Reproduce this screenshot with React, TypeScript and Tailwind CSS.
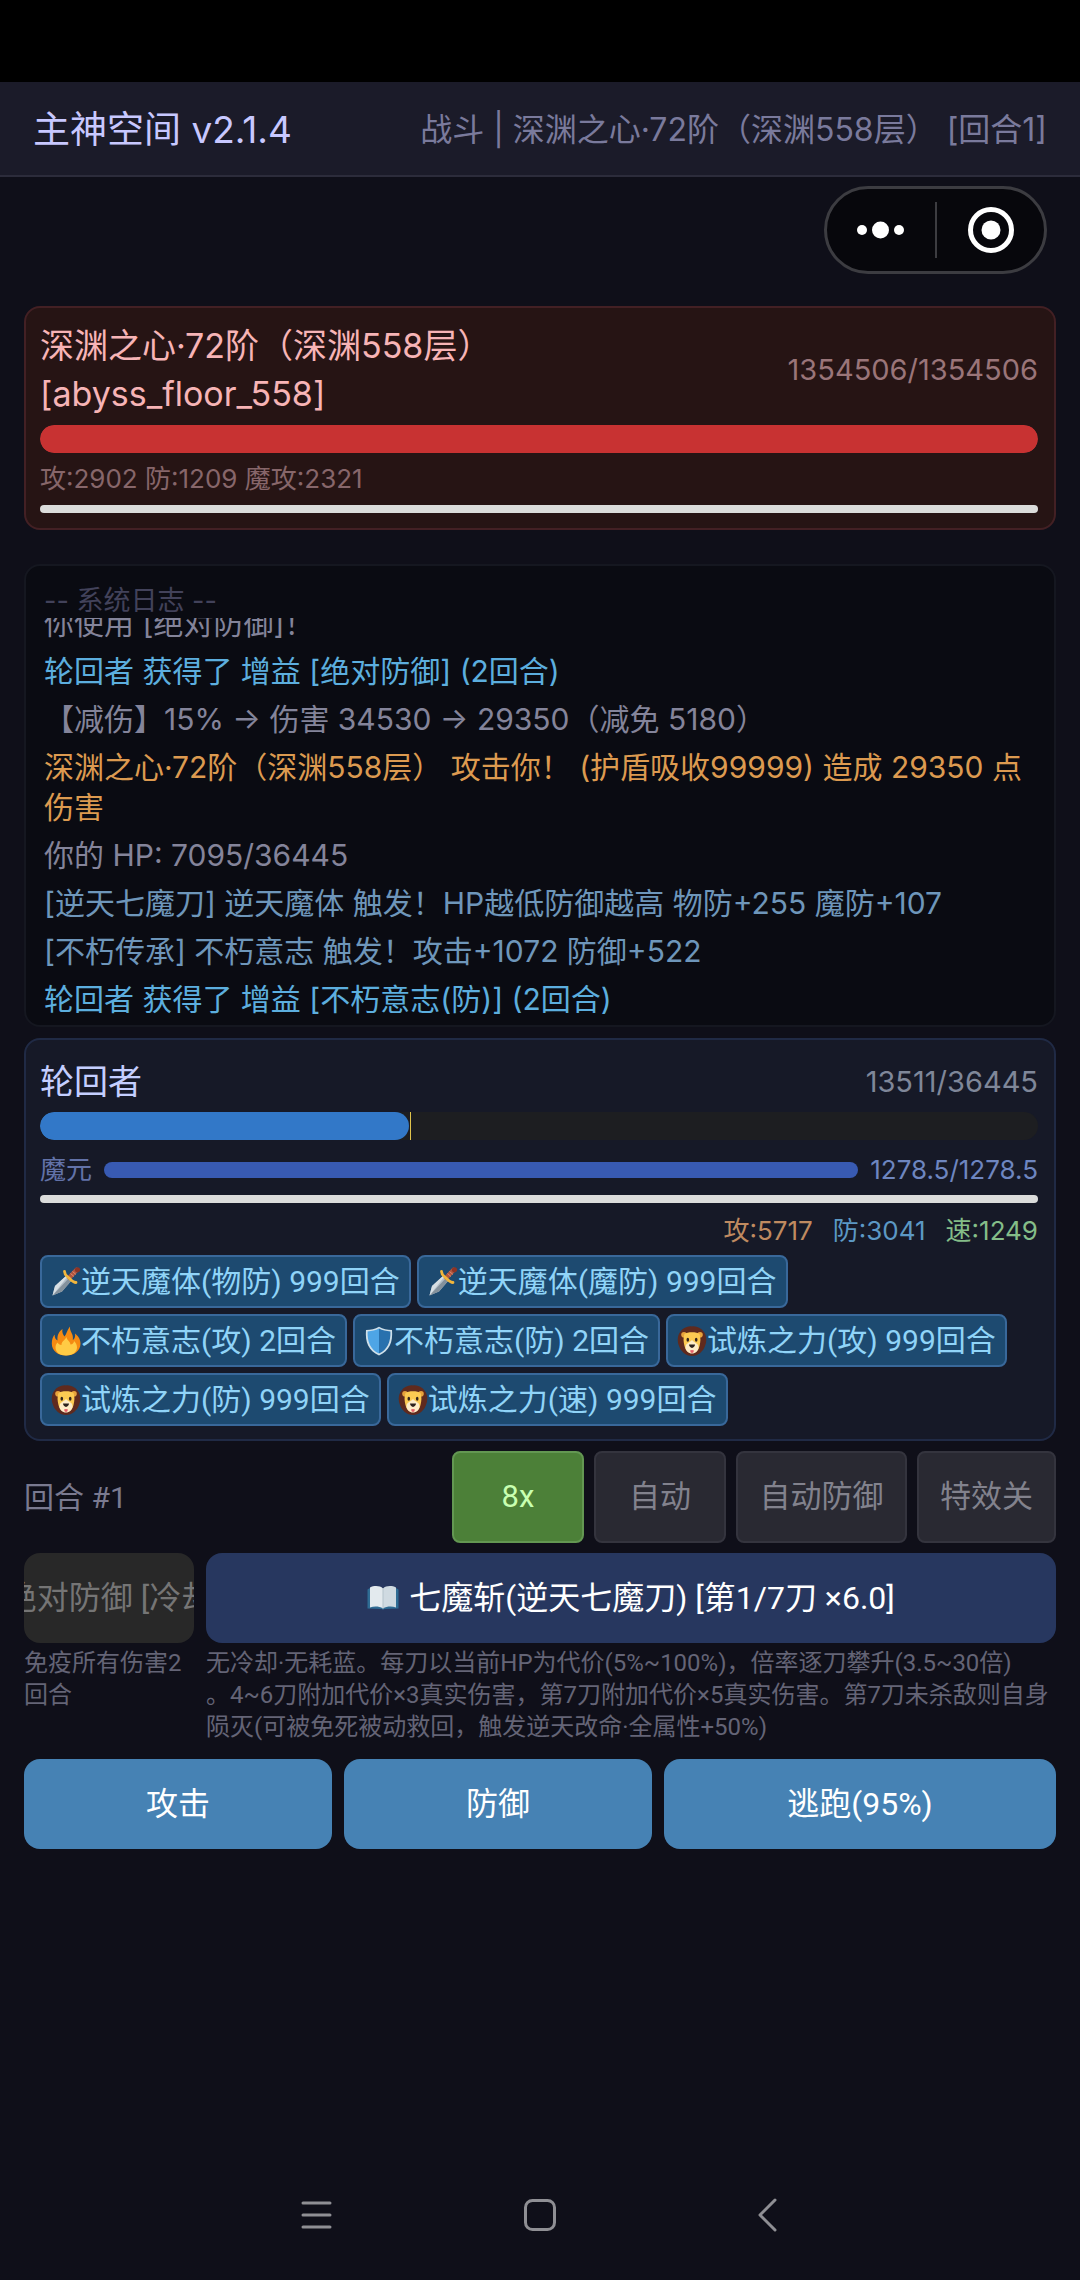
import clsx from "clsx"
import type { ReactNode } from "react"

type IconName = "dagger" | "fire" | "shield" | "lion"

interface Buff {
  icon: IconName,
  label: string,
}

interface LogLine {
  text: string,
  color: string,
}

const logs: LogLine[] = [
  { text: "你使用 [绝对防御]！", color: "text-[#84849a]" },
  { text: "轮回者 获得了 增益 [绝对防御] (2回合)", color: "text-[#5caede]" },
  { text: "【减伤】15% → 伤害 34530 → 29350（减免 5180）", color: "text-[#84849a]" },
  { text: "深渊之心·72阶（深渊558层） 攻击你！ (护盾吸收99999) 造成 29350 点伤害", color: "text-[#dc9a50]" },
  { text: "你的 HP: 7095/36445", color: "text-[#84849a]" },
  { text: "[逆天七魔刀] 逆天魔体 触发！HP越低防御越高 物防+255 魔防+107", color: "text-[#6e96ba]" },
  { text: "[不朽传承] 不朽意志 触发！攻击+1072 防御+522", color: "text-[#6e96ba]" },
  { text: "轮回者 获得了 增益 [不朽意志(防)] (2回合)", color: "text-[#5caede]" },
]

const buffs: Buff[] = [
  { icon: "dagger", label: "逆天魔体(物防) 999回合" },
  { icon: "dagger", label: "逆天魔体(魔防) 999回合" },
  { icon: "fire", label: "不朽意志(攻) 2回合" },
  { icon: "shield", label: "不朽意志(防) 2回合" },
  { icon: "lion", label: "试炼之力(攻) 999回合" },
  { icon: "lion", label: "试炼之力(防) 999回合" },
  { icon: "lion", label: "试炼之力(速) 999回合" },
]

const BuffIcon = ({ name }: { name: IconName }) => {
  if (name === "dagger") {
    return (
      <svg viewBox="0 0 30 30" className="size-[30px] shrink-0">
        <path d="M1.5 28.5 L4 19 L15.5 8.5 L20.5 13.5 L11 24.5 Z" fill="#b4bfc8" />
        <path d="M1.5 28.5 L18 11 L20.5 13.5 L11 24.5 Z" fill="#84919c" />
        <path d="M1.5 28.5 L4 19 L15.5 8.5 L16.5 9.5 Z" fill="#d7dfe4" />
        <path d="M18.5 10.5 L25.5 3" stroke="#b0553f" strokeWidth="4.6" strokeLinecap="round" />
        <path d="M19.5 6.5 L23 9.5 M21.5 4.5 L25 7.5" stroke="#dc8a70" strokeWidth="1" />
        <circle cx="26.5" cy="2.8" r="2.6" fill="#8d3426" />
        <path d="M13.5 4.5 C13.5 8 16 9 18 11 S22 15.5 25 15.5" stroke="#f2b63c" strokeWidth="2.8" strokeLinecap="round" fill="none" />
      </svg>
    )
  }
  if (name === "fire") {
    return (
      <svg viewBox="0 0 30 30" className="size-[30px] shrink-0">
        <path d="M19 .5 C18.5 4 20.5 6 21.5 9 C22 11 22 12.5 21.8 14 C23.8 13 24.5 10 24 7.5 C27 10 29.5 13 29.5 17.5 C29.5 25 23 29.5 15 29.5 C7 29.5 .8 25 .8 17.5 C.8 13.5 2 10.5 3.6 8.5 C3.6 11.5 4.5 13.5 6.5 14.5 C6 9 8 5.5 11.5 3 C10.8 6.5 12 8.5 13.5 10.5 C15.5 8 16 4 19 .5 Z" fill="#f58a12" />
        <path d="M15.5 11 C16 14.5 19 15 19.5 18.5 C21.5 18.5 22.8 17 23 15 C25 17 26 19 26 21.5 C26 26.5 21 29.5 15 29.5 C9 29.5 4.5 26.5 4.5 21.5 C4.5 19.5 5.3 17.5 6.5 16.5 C7.5 18 8.5 19 10.5 19 C10.5 15.5 13.5 14.5 15.5 11 Z" fill="#ffcb45" />
      </svg>
    )
  }
  if (name === "shield") {
    return (
      <svg viewBox="0 0 30 30" className="size-[30px] shrink-0">
        <path d="M15 .8 C19 3 23 4 28 4 C29 16 25.5 25 15 29.4 C4.5 25 1 16 2 4 C7 4 11 3 15 .8 Z" fill="#cfe0ea" />
        <path d="M15 2.6 C11.5 4.4 8 5.3 3.6 5.5 C3.2 16 6.5 23.5 15 27.6 Z" fill="#4ea5e6" />
        <path d="M15 2.6 C18.5 4.4 22 5.3 26.4 5.5 C26.8 16 23.5 23.5 15 27.6 Z" fill="#2871ae" />
      </svg>
    )
  }
  return (
    <svg viewBox="0 0 30 30" className="size-[30px] shrink-0">
      <path d="M15 .5 C19 -.3 24 2 26.5 5.5 C29.5 9 30.2 15 28 20 C26.5 25 21 30 15 30 C9 30 3.5 25 2 20 C-.2 15 .5 9 3.5 5.5 C6 2 11 -.3 15 .5 Z" fill="#5f2a1e" />
      <circle cx="7" cy="8.8" r="2.8" fill="#e8a33c" />
      <circle cx="23" cy="8.8" r="2.8" fill="#e8a33c" />
      <path d="M7.5 8 C10 5.5 20 5.5 22.5 8 C24 12 23.5 16 22.5 20 C21.5 24.5 19 26.5 15 26.5 C11 26.5 8.5 24.5 7.5 20 C6.5 16 6 12 7.5 8 Z" fill="#fcca52" />
      <path d="M15 14 C16.5 16.5 21.5 17 21.5 21 C21.5 25 18.5 27.5 15 27.5 C11.5 27.5 8.5 25 8.5 21 C8.5 17 13.5 16.5 15 14 Z" fill="#fdecc8" />
      <path d="M12 18.5 H18 C18 20.5 16.5 21.5 15 22 C13.5 21.5 12 20.5 12 18.5 Z" fill="#2b211e" />
      <path d="M13 24.5 Q15 23.5 17 24.5 Q16.5 27 15 27 Q13.5 27 13 24.5 Z" fill="#e8606a" />
      <ellipse cx="10.8" cy="13.8" rx="1.3" ry="2" fill="#33241d" />
      <ellipse cx="19.2" cy="13.8" rx="1.3" ry="2" fill="#33241d" />
    </svg>
  )
}

const BookIcon = () => (
  <svg viewBox="0 0 32 26" className="h-[26px] w-8 shrink-0">
    <path d="M.5 4.5 L3 3 L16 5 L29 3 L31.5 4.5 V23.5 L17.5 24 Q16 25 14.5 24 L.5 23.5 Z" fill="#2f6c94" />
    <path d="M3 2.5 C7 .5 13 .5 16 3.5 V23.5 C12 21 7 21 3 22.5 Z" fill="#e3eaee" />
    <path d="M29 2.5 C25 .5 19 .5 16 3.5 V23.5 C20 21 25 21 29 22.5 Z" fill="#cfdae1" />
    <path d="M16 3.5 V23.5" stroke="#b3c2cb" strokeWidth="1" />
  </svg>
)

const Bar = ({ value, className, children }: { value: number, className: string, children?: ReactNode }) => (
  <div className="flex h-7 overflow-hidden rounded-[14px] bg-[#1d1e21]">
    <div className={clsx("h-full rounded-[14px]", className)} style={{ width: `${value}%` }} />
    {children}
  </div>
)

const ToggleButton = ({ label, active, className }: { label: string, active?: boolean, className: string }) => (
  <button
    type="button"
    className={clsx(
      "h-[92px] rounded-lg border-2 text-[31px]",
      active ? "border-[#639752] bg-[#4c8038] text-[#c8ffb0]" : "border-[#34343e] bg-[#292932] text-[#82828d]",
      className
    )}
  >
    {label}
  </button>
)

const Capsule = () => (
  <div className="flex h-[88px] w-[223px] items-center rounded-full border-3 border-[#3c3c41] bg-[#07070c]">
    <button type="button" aria-label="更多" className="flex flex-1 justify-center">
      <svg viewBox="0 0 48 18" className="h-[18px] w-12" fill="#fff">
        <circle cx="5" cy="9" r="5" />
        <circle cx="23.5" cy="9" r="8.5" />
        <circle cx="42" cy="9" r="5" />
      </svg>
    </button>
    <div className="h-14 w-[2px] bg-[#3c3c41]" />
    <button type="button" aria-label="关闭" className="flex flex-1 justify-center">
      <svg viewBox="0 0 48 48" className="size-12">
        <circle cx="25" cy="24" r="20.5" fill="none" stroke="#fff" strokeWidth="5" />
        <circle cx="25" cy="24" r="9.5" fill="#fff" />
      </svg>
    </button>
  </div>
)

export default function App() {
  return (
    <div className="flex min-h-screen flex-col bg-[#0f0f19] font-[Inter,'Noto_Sans_CJK_SC',sans-serif]">
      <div className="h-[82px] bg-black" />
      <header className="flex h-[95px] items-center justify-between border-b-2 border-[#2c2c3b] bg-[#1b1b29] px-[33px] pt-[2px]">
        <h1 className="text-[37px] text-[#c8c8ff]">主神空间 v2.1.4</h1>
        <p className="text-[32px] text-[#7a7a9c]">战斗 | 深渊之心·72阶（深渊558层） [回合1]</p>
      </header>
      <div className="flex justify-end px-[33px] pt-[9px]">
        <Capsule />
      </div>

      <main className="flex flex-col px-6 pt-8">
        <section className="rounded-2xl border-2 border-[#432024] bg-[#261414] pt-[14px] pr-4 pb-[15px] pl-[14px]">
          <div className="flex items-center justify-between">
            <h2 className="w-[500px] text-[34px] leading-[48px] text-[#f7b4b6]">
              深渊之心·72阶（深渊558层） [abyss_floor_558]
            </h2>
            <span className="text-[29px] text-[#9a7579]">1354506/1354506</span>
          </div>
          <div className="mt-[7px]">
            <Bar value={100} className="bg-[#c83232]" />
          </div>
          <p className="my-2 text-[26px] leading-9 text-[#87666a]">攻:2902 防:1209 魔攻:2321</p>
          <div className="h-2 rounded-full bg-[#dbdcdb]" />
        </section>

        <section className="mt-[34px] rounded-2xl border-2 border-[#151720] bg-[#0a0b12] px-[18px] pt-[18px]">
          <h3 className="text-[27px] leading-[34px] text-[#42425a]">-- 系统日志 --</h3>
          <div className="flex h-[407px] flex-col justify-end gap-2 overflow-hidden pb-[6px]">
            {logs.map((log, index) => (
              <p key={index} className={clsx("shrink-0 text-[30px] leading-10", log.color)}>{log.text}</p>
            ))}
          </div>
        </section>

        <section className="mt-[11px] rounded-2xl border-2 border-[#202a45] bg-[#161927] pt-[18px] pr-4 pb-[13px] pl-[14px]">
          <div className="flex items-center justify-between leading-[48px]">
            <h2 className="text-[34px] text-[#c4ceff]">轮回者</h2>
            <span className="text-[29px] text-[#7f8799]">13511/36445</span>
          </div>
          <div className="mt-[6px]">
            <Bar value={37} className="bg-[#3278c8]">
              <div className="ml-px w-px bg-[#e0c44c]" />
            </Bar>
          </div>
          <div className="mt-3 flex items-center gap-3 text-[26px] leading-9">
            <span className="text-[#6272a8]">魔元</span>
            <div className="h-4 flex-1 rounded-full bg-[#385ab2]" />
            <span className="text-[#6e86c0]">1278.5/1278.5</span>
          </div>
          <div className="mt-[7px] h-2 rounded-full bg-[#dbdcdb]" />
          <div className="mt-[10px] flex justify-end gap-5 text-[26px] leading-9">
            <span className="text-[#bf8a60]">攻:5717</span>
            <span className="text-[#5c98c4]">防:3041</span>
            <span className="text-[#84bd88]">速:1249</span>
          </div>
          <ul className="mt-[6px] flex flex-wrap gap-[6px] font-[Roboto,'Noto_Sans_CJK_SC',sans-serif]">
            {buffs.map(buff => (
              <li
                key={buff.label}
                className="flex h-[53px] items-center rounded-lg border-2 border-[#39689a] bg-[#1d4a70] px-[9px] text-[30px] text-[#90d4f8]"
              >
                <BuffIcon name={buff.icon} />
                {buff.label}
              </li>
            ))}
          </ul>
        </section>

        <div className="font-[Roboto,'Noto_Sans_CJK_SC',sans-serif]">
          <div className="mt-[10px] flex items-center gap-[10px]">
            <span className="mr-auto text-[30px] text-[#7a7a90]">回合 #1</span>
            <ToggleButton label="8x" active className="w-[132px]" />
            <ToggleButton label="自动" className="w-[132px]" />
            <ToggleButton label="自动防御" className="w-[171px]" />
            <ToggleButton label="特效关" className="w-[139px]" />
          </div>

          <div className="mt-[10px] flex gap-3 text-[24px] leading-8 text-[#646476]">
            <div className="w-[170px] shrink-0">
              <button
                type="button"
                disabled
                className="flex h-[90px] w-full items-center justify-center overflow-hidden rounded-2xl bg-[#282828] text-[32px] whitespace-nowrap text-[#757575]"
              >
                绝对防御 [冷却
              </button>
              <p className="mt-1">免疫所有伤害2回合</p>
            </div>
            <div className="flex-1">
              <button
                type="button"
                className="flex h-[90px] w-full items-center justify-center gap-[10px] rounded-2xl bg-[#27375f] text-[32px] text-white"
              >
                <BookIcon />
                七魔斩(逆天七魔刀) [第1/7刀 ×6.0]
              </button>
              <p className="mt-1">
                无冷却·无耗蓝。每刀以当前HP为代价(5%~100%)，倍率逐刀攀升(3.5~30倍)
                <br />
                。4~6刀附加代价×3真实伤害，第7刀附加代价×5真实伤害。第7刀未杀敌则自身陨灭(可被免死被动救回，触发逆天改命·全属性+50%)
              </p>
            </div>
          </div>

          <div className="mt-4 grid grid-cols-[11fr_11fr_14fr] gap-3 text-[32px] text-white">
            <button type="button" className="h-[90px] rounded-2xl bg-[#4682b4]">攻击</button>
            <button type="button" className="h-[90px] rounded-2xl bg-[#4682b4]">防御</button>
            <button type="button" className="h-[90px] rounded-2xl bg-[#4682b4]">逃跑(95%)</button>
          </div>
        </div>
      </main>

      <nav className="mt-auto flex h-[130px] items-center justify-center gap-[180px]">
        <button type="button" aria-label="最近任务" className="p-1">
          <svg viewBox="0 0 40 40" className="size-10" stroke="#8f8f94" strokeWidth="3" strokeLinecap="round">
            <path d="M11 8 H38 M11 20 H38 M11 32 H38" />
          </svg>
        </button>
        <button type="button" aria-label="主屏幕" className="p-1">
          <svg viewBox="0 0 40 40" className="size-10" fill="none" stroke="#8f8f94" strokeWidth="3">
            <rect x="5.5" y="5.5" width="29" height="29" rx="7" />
          </svg>
        </button>
        <button type="button" aria-label="返回" className="p-1">
          <svg viewBox="0 0 40 40" className="size-10" fill="none" stroke="#8f8f94" strokeWidth="3" strokeLinecap="round" strokeLinejoin="round">
            <path d="M27 5 L12 20 L27 35" />
          </svg>
        </button>
      </nav>
    </div>
  )
}
